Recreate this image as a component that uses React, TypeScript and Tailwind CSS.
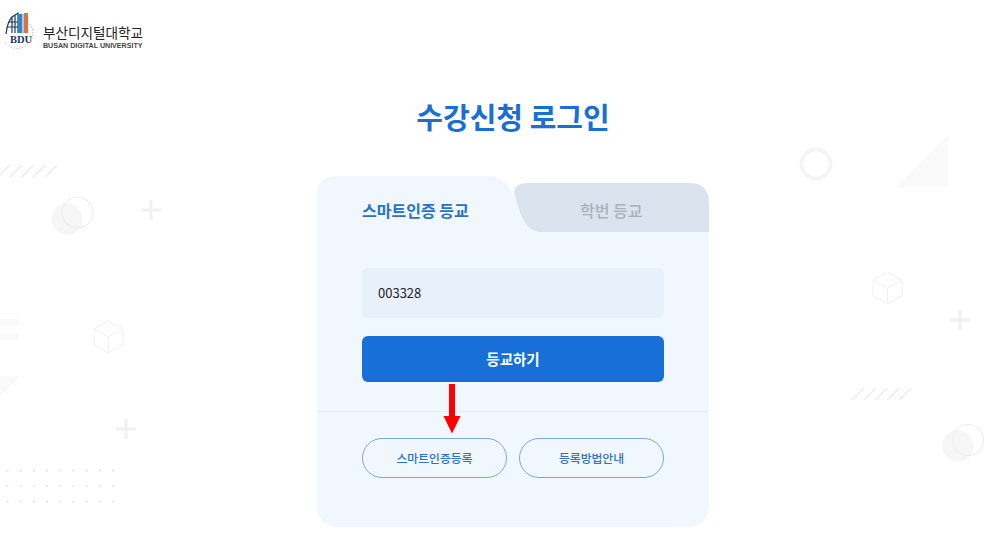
const KR = "font-['Noto_Sans_CJK_KR','Noto_Sans',sans-serif]";

function Cube({ x, y, s = 1 }: { x: number; y: number; s?: number }) {
  return (
    <g transform={`translate(${x} ${y}) scale(${s})`} fill="none" stroke="#f0f0f0" strokeWidth="1">
      <path d="M14.5 0 L29 8 V24 L14.5 32 L0 24 V8 Z M0 8 L14.5 16 L29 8 M14.5 16 V32" />
    </g>
  );
}

function Plus({ x, y }: { x: number; y: number }) {
  return <path d={`M${x - 10} ${y} H${x + 10} M${x} ${y - 10} V${y + 10}`} stroke="#f1f1f1" strokeWidth="3" fill="none" />;
}

function Hatch({ x, y }: { x: number; y: number }) {
  return (
    <g stroke="#ececec" strokeWidth="1.4">
      {[0, 1, 2, 3, 4].map((i) => (
        <line key={i} x1={x + i * 11.8} y1={y + 12} x2={x + i * 11.8 + 12} y2={y} />
      ))}
    </g>
  );
}

function Background() {
  const dots: [number, number][] = [];
  for (let r = 0; r < 3; r++) for (let c = 0; c < 9; c++) dots.push([7.5 + c * 13.2, 470.5 + r * 15.6]);
  return (
    <svg className="absolute inset-0" width="1000" height="550" viewBox="0 0 1000 550">
      <Hatch x={-2} y={165} />
      <circle cx="67" cy="219" r="15.5" fill="#f6f6f6" />
      <circle cx="77.5" cy="212.5" r="15.5" fill="none" stroke="#eeeeee" strokeWidth="1.2" />
      <Plus x={151} y={210} />
      <rect x="0" y="319" width="19" height="7" fill="#fafafa" />
      <rect x="0" y="333" width="19" height="7" fill="#fafafa" />
      <path d="M0 376 H20 L0 396 Z" fill="#fafafa" />
      <Cube x={94} y={321} />
      <Plus x={126} y={429} />
      {dots.map(([x, y]) => (
        <circle key={`${x}-${y}`} cx={x} cy={y} r="1.2" fill="#e9e9e9" />
      ))}
      <circle cx="816" cy="164" r="14.5" fill="none" stroke="#f5f5f5" strokeWidth="4" />
      <path d="M948 135 V187 H895 Z" fill="#fafafa" />
      <Cube x={873} y={272} />
      <Plus x={960} y={320} />
      <Hatch x={852} y={388} />
      <circle cx="958" cy="446" r="15.5" fill="#f6f6f6" />
      <circle cx="968" cy="440" r="15.5" fill="none" stroke="#eeeeee" strokeWidth="1.2" />
    </svg>
  );
}

function Logo() {
  return (
    <div className="flex items-start h-[54px] pl-[5px] pt-[12px]">
      <svg width="32" height="42" viewBox="0 0 32 42" className="shrink-0 overflow-visible">
        <path d="M25 12 A15 15 0 1 1 0 30" fill="none" stroke="#999999" strokeWidth="0.9" strokeDasharray="1 1.8" />
        <path d="M1 22 C2 14 4 8 7 5 V21 M7 5 L13 1 V21 M3 10 H13 M1.5 15 H13 M10 3 V21" fill="none" stroke="#23375f" strokeWidth="1.2" />
        <rect x="13" y="2" width="4" height="19" fill="#2f86c8" />
        <rect x="17" y="2" width="2" height="19" fill="#a8cbe6" />
        <rect x="19" y="1" width="4" height="20" fill="#e0703c" />
        <text x="16" y="31" textAnchor="middle" fontFamily="'Liberation Serif',serif" fontWeight="700" fontSize="10.5" fill="#23375f">BDU</text>
      </svg>
      <div className="ml-[6px] mt-[11px] flex flex-col">
        <span className="text-[13.6px] leading-[18px] text-[#222222]">부산디지털대학교</span>
        <span className="font-['Liberation_Sans',sans-serif] font-bold text-[7.1px] leading-[10px] text-[#444444] whitespace-nowrap">BUSAN DIGITAL UNIVERSITY</span>
      </div>
    </div>
  );
}

function Tabs() {
  return (
    <div className="relative flex h-[56px]">
      <svg className="absolute inset-0" width="392" height="56" viewBox="0 0 392 56">
        <path d="M0 56 V20 Q0 0 20 0 H172 C184 0 191 8 196 18 C201 35 208 56 222 56 Z" fill="#f0f7ff" />
        <path d="M197 16 Q198 7 212 7 H372 Q392 7 392 27 V56 H222 C208 54 202 38 197 16 Z" fill="#dbe3ee" />
      </svg>
      <div className="relative w-[197px] pl-[45px] pt-[22px] text-[16px] leading-[24px] font-bold text-[#2a72c6]">스마트인증 등교</div>
      <div className="relative flex-1 pt-[22px] pl-[66px] text-[16px] leading-[24px] font-medium text-[#a9b0bb]">학번 등교</div>
    </div>
  );
}

export default function App() {
  return (
    <div className={`relative w-[1000px] h-[550px] overflow-hidden bg-white ${KR}`}>
      <Background />
      <div className="relative flex flex-col">
        <Logo />
        <div className="ml-[317px] w-[392px]">
          <h1 className="mt-[38px] text-center text-[29px] leading-[48px] font-bold text-[#1a6fd2]">수강신청 로그인</h1>
          <div className="relative mt-[36px]">
            <Tabs />
            <div className="bg-[#f0f7ff] rounded-b-[20px] h-[295px] flex flex-col">
              <div className="mx-[45px] mt-[36px] h-[50px] rounded-[6px] bg-[#e8f0fc] flex items-center pl-[16px] text-[13px] text-[#222222]">003328</div>
              <button className="mx-[45px] mt-[18px] h-[46px] rounded-[6px] bg-[#176fd7] text-white text-[14.5px] font-bold">등교하기</button>
              <div className="mt-[29px] h-px bg-[#e3ecf8]" />
              <div className="mx-[45px] mt-[26px] flex gap-[12px]">
                <button className="flex-1 h-[40px] rounded-full border border-[#7fa6d8] text-[11.8px] font-medium text-[#2f72c4]">스마트인증등록</button>
                <button className="flex-1 h-[40px] rounded-full border border-[#7fa6d8] text-[11.8px] font-medium text-[#2f72c4]">등록방법안내</button>
              </div>
            </div>
            <svg className="absolute left-[126px] top-[208px]" width="18" height="50" viewBox="0 0 18 50">
              <path d="M6 0 H12 V32 H17.5 L9 49.5 L0.5 32 H6 Z" fill="#fe0000" />
            </svg>
          </div>
        </div>
      </div>
    </div>
  );
}
